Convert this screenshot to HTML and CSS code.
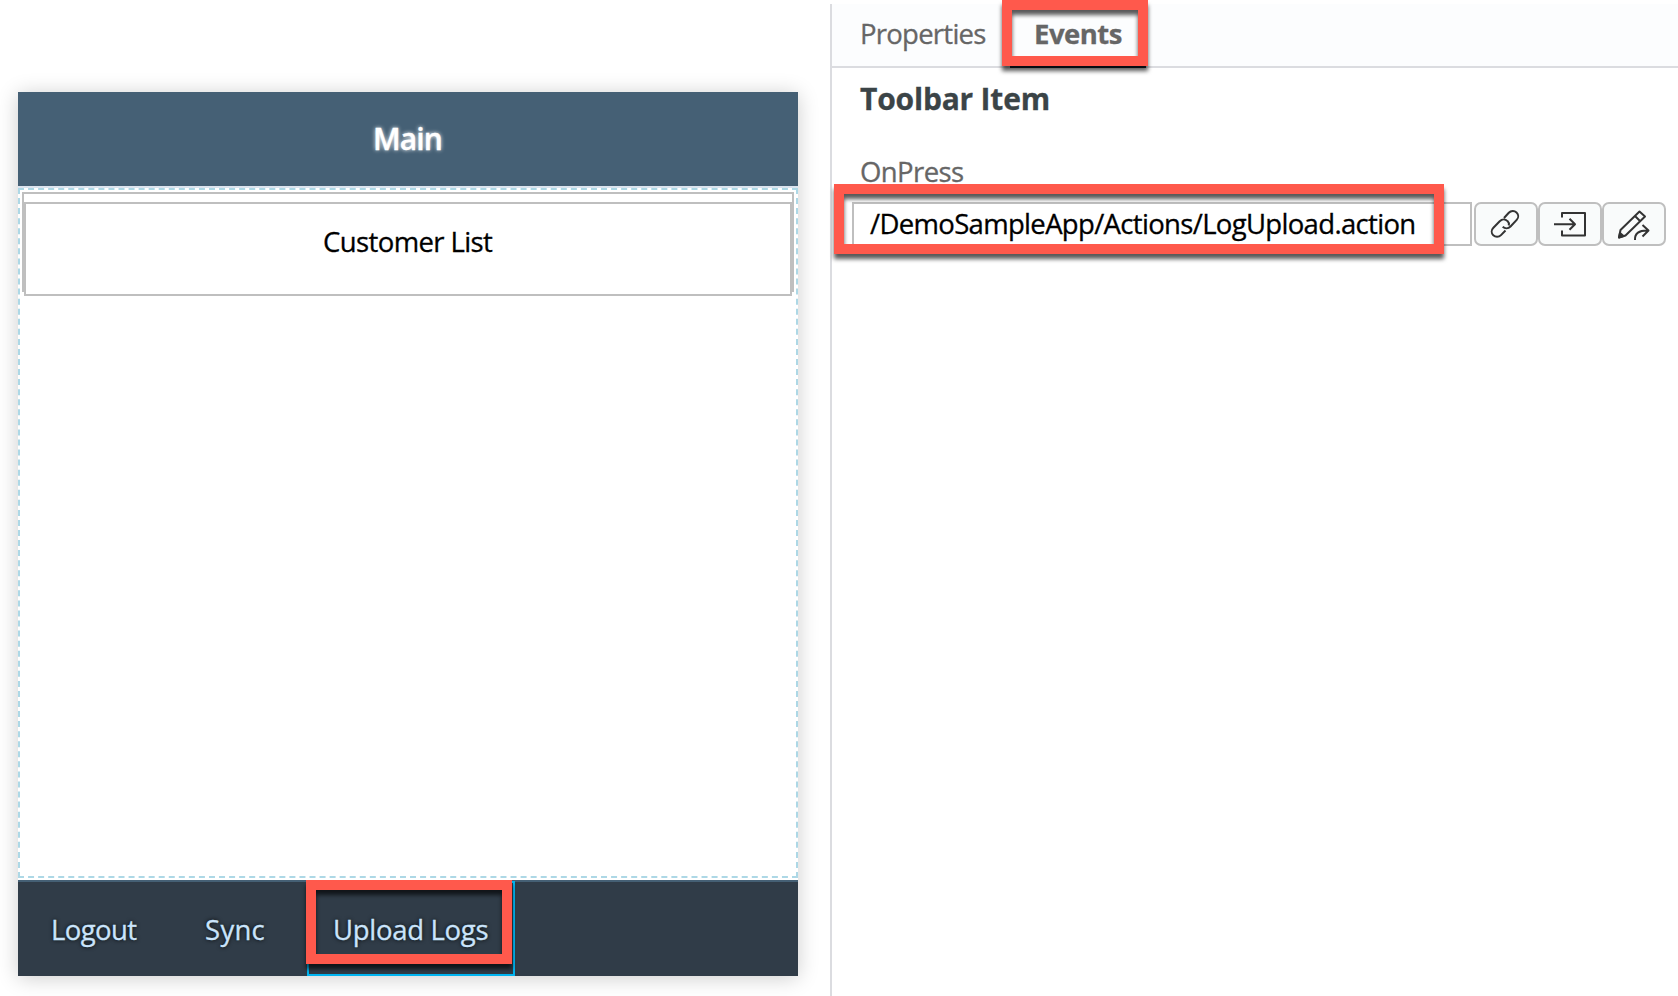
FILE: index.html
```html
<!DOCTYPE html>
<html lang="en">
<head>
<meta charset="utf-8">
<title>Toolbar Item</title>
<link rel="stylesheet" href="styles.css">
</head>
<body>
<main class="canvas">
  <section class="phone">
    <header class="phone-header"><span class="t-main">Main</span></header>
    <div class="phone-body">
      <div class="section">
        <div class="list-item"><span class="t-customer">Customer List</span></div>
      </div>
    </div>
    <footer class="toolbar">
      <div class="tool tool-logout"><span class="t-logout">Logout</span></div>
      <div class="tool tool-sync"><span class="t-sync">Sync</span></div>
      <div class="tool tool-upload"><span class="t-upload">Upload Logs</span><i class="mark mark-upload"></i></div>
    </footer>
  </section>
</main>
<aside class="panel">
  <nav class="tabs">
    <div class="tab"><span class="t-properties">Properties</span></div>
    <div class="tab active"><span class="t-events">Events</span><i class="mark mark-events"></i></div>
  </nav>
  <h1 class="title"><span class="t-title">Toolbar Item</span></h1>
  <div class="label"><span class="t-label">OnPress</span></div>
  <div class="field">
    <div class="input"><span class="t-input">/DemoSampleApp/Actions/LogUpload.action</span></div>
    <i class="mark mark-input"></i>
    <button class="btn"><svg viewBox="0 0 60 40"><path d="M28 14l4.800-5.200c2.200-2.300 5.600-2.300 7.700-.4 2.200 2 2.200 5.300.2 7.500l-6.200 6.600c-2.300 2.400-5.700 2.300-7.800.3M29.500 26.500l-4.500 4.600c-2.200 2.300-5.600 2.200-7.700.2-2.100-2.100-2.100-5.400.1-7.600l6.300-6.500c2.400-2.300 5.700-2.200 7.800-.1 1.100 1 1.700 2.700 1.300 4.300"/></svg></button>
    <button class="btn"><svg viewBox="0 0 60 40"><path d="M22 13.500V9h23v22.500H22V26.500M14 20.300h20.500M29.500 14.800l5.500 5.500-5.500 5.500"/></svg></button>
    <button class="btn"><svg viewBox="0 0 60 40"><path d="M15 33.500l1.500-7.500L35.500 7.500l5.500 5L21.500 31.500zM31 12l5 5"/><path class="solid" d="M15 33.500l1-4.500 3.500 3z"/><path d="M31 36c-.5-6.500 4-10 13.500-9.500M38.500 21l6 5.500-6 6"/></svg></button>
  </div>
</aside>
</body>
</html>
```
FILE: styles.css
```css
* { box-sizing: border-box; }
body { margin: 0; width: 1678px; height: 996px; overflow: hidden; display: flex; background: #fff; font-family: "Open Sans", sans-serif; font-size: 27.500px; line-height: 40px; color: #000; -webkit-text-stroke: .3px; }
span { display: block; white-space: nowrap; }
.canvas { width: 830px; padding: 92px 0 0 18px; flex: none; }
.phone { width: 780px; height: 884px; display: flex; flex-direction: column; background: #fff; box-shadow: 0 2px 20px rgba(0,0,0,.2); }
.phone-header { height: 96px; background: #456075; border-bottom: 2px solid #dbe4ef; color: #fff; padding: 27px 0 0 355px; }
.phone-body { height: 690px; margin-bottom: 2px; border: 2px dashed #add8e6; padding: 2px; }
.section { height: 100px; border: 2px solid #bfbfbf; border-bottom: 0; padding-top: 8px; }
.list-item { height: 94px; border: 2px solid #bfbfbf; padding: 18px 0 0 297px; background: #fff; }
.toolbar { height: 96px; background: #303c48; border-top: 2px solid #456075; display: flex; color: #cae4fb; text-shadow: 0 0 4px #000; }
.tool { height: 94px; padding-top: 28px; }
.tool-logout { width: 154px; padding-left: 33px; }
.tool-sync { width: 135px; padding-left: 33px; }
.tool-upload { position: relative; width: 208px; height: 95px; margin-top: -1px; padding: 27px 0 0 24px; border: 2px solid #00b4f0; }
.mark { position: absolute; z-index: 2; border: 10px solid #ff594c; filter: drop-shadow(0 5px 2px rgba(0,0,0,.65)); }
.mark-upload { left: -3px; top: -3px; width: 206px; height: 84px; }
.panel { position: relative; width: 848px; height: 992px; margin-top: 4px; border-left: 2px solid #dbdce0; }
.tabs { height: 64px; background: #fcfdfe; border-bottom: 2px solid #dbdce0; display: flex; color: #666; }
.tab { height: 64px; width: 178px; padding: 10px 0 0 28px; }
.tab.active { position: relative; width: 136px; padding-left: 24px; border-bottom: 2px solid #162433; }
.mark-events { left: -8px; top: -4px; width: 146px; height: 66px; }
.title { margin: 0; height: 74px; padding: 11px 0 0 28px; color: #3b4447; font-size: 30px; }
.label { height: 60px; padding: 10px 0 0 28px; color: #666; }
.field { position: relative; display: flex; padding-left: 20px; }
.input { width: 620px; height: 44px; border: 2px solid #bfbfbf; padding-left: 16px; margin-right: 2px; }
.mark-input { left: 2px; top: -18px; width: 610px; height: 70px; }
.btn { width: 64px; height: 44px; padding: 0; border: 2px solid #bfbfbf; border-radius: 7px; background: #f9fbfb; }
.btn svg { display: block; width: 60px; height: 40px; fill: none; stroke: #333; stroke-width: 2; stroke-linejoin: round; }
.btn .solid { fill: #333; }
.t-main { font-size: 30px; font-weight: 600; letter-spacing: -.9px; text-shadow: 0 0 4px #fff; }
.t-customer, .t-label, .t-logout { letter-spacing: -.6px; }
.t-input { letter-spacing: -.67px; }
.t-properties { letter-spacing: -.75px; }
.t-sync { letter-spacing: .3px; }
.t-upload { letter-spacing: -.3px; }
.t-events { font-weight: 700; letter-spacing: -.5px; }
.t-title { font-weight: 700; letter-spacing: -.2px; }
```
